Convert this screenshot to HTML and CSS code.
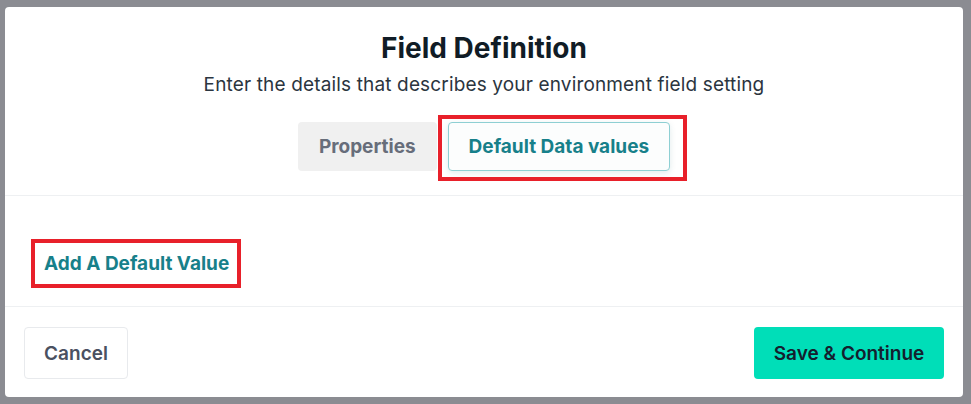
FILE: index.html
```html
<!DOCTYPE html>
<html lang="en">
<head>
<meta charset="utf-8">
<title>Field Definition</title>
<link rel="stylesheet" href="styles.css">
</head>
<body>
<div class="backdrop">
  <div class="modal">
    <header class="modal-head">
      <h1 class="title">Field Definition</h1>
      <p class="subtitle">Enter the details that describes your environment field setting</p>
      <div class="tabs">
        <button class="tab">Properties</button>
        <button class="tab tab-active">Default Data values<span class="mark mark-tab"></span></button>
      </div>
    </header>
    <section class="modal-body">
      <a class="add-link">Add A Default Value</a>
    </section>
    <footer class="modal-foot">
      <button class="btn btn-cancel">Cancel</button>
      <button class="btn btn-save">Save &amp; Continue</button>
    </footer>
  </div>
</div>
</body>
</html>
```

FILE: styles.css
```css
* { box-sizing: border-box; }
html, body { margin: 0; padding: 0; }
body {
  width: 971px;
  height: 404px;
  overflow: hidden;
  background: #8b8c92;
  font-family: Inter, "Noto Sans", "Liberation Sans", sans-serif;
}
.backdrop {
  padding: 7px 8px 7px 5px;
}
.modal {
  width: 958px;
  height: 390px;
  background: #ffffff;
  border-radius: 4px;
  display: flex;
  flex-direction: column;
}
.modal-head {
  height: 189px;
  padding-top: 24px;
  display: flex;
  flex-direction: column;
  align-items: center;
  border-bottom: 1px solid #eef0f2;
}
.title {
  margin: 0;
  font-size: 28px;
  line-height: 34px;
  font-weight: 700;
  color: #101c26;
}
.subtitle {
  margin: 8px 0 0;
  font-size: 19px;
  line-height: 24px;
  font-weight: 400;
  color: #2b3540;
  letter-spacing: 0.15px;
}
.tabs {
  margin-top: 25px;
  display: flex;
  gap: 11px;
}
.tab {
  position: relative;
  height: 49px;
  padding: 0 20px;
  border: 1px solid transparent;
  border-radius: 4px;
  background: #f0f0f0;
  color: #676d7a;
  font-family: inherit;
  font-size: 19px;
  font-weight: 700;
}
.tab-active {
  background: #fcfdfd;
  border-color: #8ecfd3;
  color: #17808a;
  box-shadow: 0 2px 6px rgba(0, 90, 100, 0.12);
}
.mark {
  position: absolute;
  border: 4px solid #e8202a;
  pointer-events: none;
}
.mark-tab {
  top: -8px;
  bottom: -11px;
  left: -11px;
  right: -18px;
}
.modal-body {
  height: 111px;
  padding: 43px 0 0 26px;
  border-bottom: 1px solid #eef0f2;
}
.add-link {
  display: inline-flex;
  align-items: center;
  height: 49px;
  padding: 0 8px 0 9px;
  border: 4px solid #e8202a;
  color: #17808a;
  font-size: 19px;
  font-weight: 700;
}
.modal-foot {
  flex: 1;
  padding: 20px 19px 0;
  display: flex;
  justify-content: space-between;
  align-items: flex-start;
}
.btn {
  height: 52px;
  border-radius: 4px;
  font-family: inherit;
  font-size: 19px;
  font-weight: 600;
}
.btn-cancel {
  width: 104px;
  background: #ffffff;
  border: 1px solid #e8eaed;
  color: #4a5161;
}
.btn-save {
  width: 190px;
  background: #00deb8;
  border: none;
  color: #14202e;
}
```
